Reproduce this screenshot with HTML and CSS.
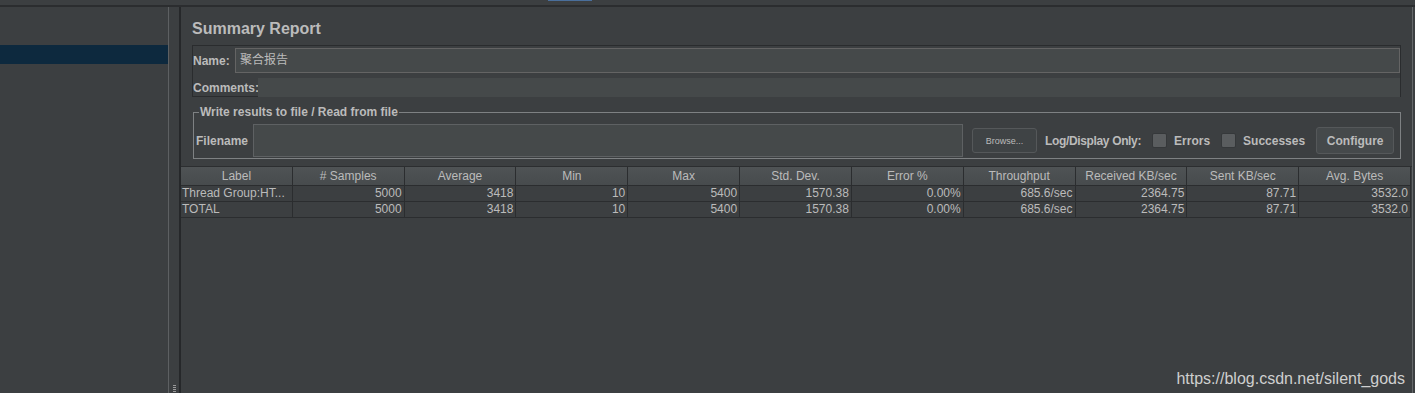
FILE: index.html
```html
<!DOCTYPE html>
<html>
<head>
<meta charset="utf-8">
<link rel="stylesheet" href="styles.css">
</head>
<body>
<div class="top"><div class="tab"></div></div>
<div class="main">
  <div class="left">
    <div class="sel"></div>
  </div>
  <div class="split"><div class="grip"></div></div>
  <div class="right">
    <div class="pad">
      <div class="title">Summary Report</div>
      <div class="namebox">
        <div class="row1"><span class="lbl">Name:</span><div class="nameinput">聚合报告</div></div>
        <div class="row2"><span class="lbl">Comments:</span><div class="cominput"></div></div>
      </div>
      <fieldset class="fs">
        <legend>Write results to file / Read from file</legend>
        <div class="fsrow">
          <span class="lbl">Filename</span>
          <div class="fileinput"></div>
          <button class="browse">Browse...</button>
          <span class="lbl ldo">Log/Display Only:</span>
          <span class="chk"></span><span class="lbl">Errors</span>
          <span class="chk"></span><span class="lbl">Successes</span>
          <button class="conf">Configure</button>
        </div>
      </fieldset>
    </div>
    <div class="table">
      <div class="thead">
        <div>Label</div><div># Samples</div><div>Average</div><div>Min</div><div>Max</div><div>Std. Dev.</div><div>Error %</div><div>Throughput</div><div>Received KB/sec</div><div>Sent KB/sec</div><div>Avg. Bytes</div>
      </div>
      <div class="trow">
        <div class="l">Thread Group:HT...</div><div>5000</div><div>3418</div><div>10</div><div>5400</div><div>1570.38</div><div>0.00%</div><div>685.6/sec</div><div>2364.75</div><div>87.71</div><div>3532.0</div>
      </div>
      <div class="trow">
        <div class="l">TOTAL</div><div>5000</div><div>3418</div><div>10</div><div>5400</div><div>1570.38</div><div>0.00%</div><div>685.6/sec</div><div>2364.75</div><div>87.71</div><div>3532.0</div>
      </div>
      <div class="wm">https://blog.csdn.net/silent_gods</div>
    </div>
  </div>
</div>
</body>
</html>
```
FILE: styles.css
```css
html, body { margin: 0; padding: 0; }
body {
  width: 1415px; height: 393px; overflow: hidden;
  background: #3c3f41;
  font-family: "Liberation Sans", "Noto Sans CJK SC", sans-serif;
  font-size: 12px; color: #bbbbbb;
}
.top { height: 5px; border-bottom: 2px solid #2b2d2f; position: relative; }
.tab { position: absolute; left: 548px; top: 0; width: 44px; height: 1px; background: #4a6f9c; }
.main { display: flex; height: 386px; }
.left { flex: 0 0 169px; border-right: 1px solid #5d6062; padding-top: 38px; box-sizing: border-box; }
.sel { height: 19px; background: #0d293e; }
.split { flex: 0 0 10px; position: relative; }
.grip { position: absolute; left: 4px; bottom: 0; width: 3px; height: 8px;
  background: repeating-linear-gradient(180deg, #9a9a9a 0 1px, transparent 1px 2px); }
.right { flex: 1 1 auto; min-width: 0; border-left: 2px solid #26282a; border-right: 1px solid #65686a; margin-right: 2px; display: flex; flex-direction: column; position: relative; }
.pad { padding: 0 11px 0 11px; }
.title { font-weight: bold; font-size: 16px; margin-top: 13px; height: 25px; color: #bbbbbb; }
.lbl { font-weight: bold; white-space: nowrap; }
.namebox { border: 1px solid #2a2c2e; height: 52px; box-sizing: border-box; padding: 2px 0 0 0; display: flex; flex-direction: column; }
.row1 { display: flex; align-items: center; height: 25px; }
.row1 .lbl { width: 42px; }
.nameinput { flex: 1; height: 25px; box-sizing: border-box; background: #45494a; border: 1px solid #646464; padding-left: 4px; line-height: 22px; font-size: 12px; }
.row2 { display: flex; align-items: center; height: 19px; margin-top: 5px; }
.row2 .lbl { width: 65px; }
.cominput { flex: 1; height: 19px; background: #45494a; }
.fs { margin: 9px 0 0 1px; border: 1px solid #7e8183; padding: 6px 5px 1px 2px; min-width: 0; }
.fs legend { font-weight: bold; padding: 0 1px; margin-left: 3px; line-height: 12px; }
.fsrow { display: flex; align-items: center; height: 33px; }
.fsrow > .lbl:first-child { width: 57px; }
.fileinput { width: 710px; height: 33px; box-sizing: border-box; background: #45494a; border: 1px solid #5e6163; }
.browse { margin-left: 9px; width: 65px; height: 25px; background: #3f4345; border: 1px solid #55585a; border-radius: 3px; color: #bbbbbb; font-family: "Liberation Sans", sans-serif; font-size: 9px; padding: 0; }
.ldo { margin-left: 8px; letter-spacing: -0.35px; }
.chk { width: 13px; height: 13px; background: #5a5d5f; border: 1px solid #35383a; border-radius: 2px; margin: 0 7px 0 11px; }
.conf { margin-left: 11px; width: 78px; height: 27px; background: #45494b; border: 1px solid #55585a; border-radius: 3px; color: #bbbbbb; font-family: "Liberation Sans", sans-serif; font-size: 12px; font-weight: bold; padding: 0; }
.table { margin-top: 7px; border-top: 1px solid #2c2e30; flex: 1; position: relative; }
.thead, .trow { display: grid; grid-template-columns: repeat(11, 1fr); width: 1230px; }
.thead { height: 18px; background: linear-gradient(#4f5355, #474b4d); border-bottom: 1px solid #2b2d2f; }
.thead div { text-align: center; line-height: 18px; border-right: 1px solid #2b2d2f; white-space: nowrap; overflow: hidden; }
.trow { height: 15px; border-bottom: 1px solid #2b2d2f; }
.trow div { text-align: right; line-height: 15px; padding-right: 2px; border-right: 1px solid #2b2d2f; white-space: nowrap; overflow: hidden; }
.trow div.l { text-align: left; padding-left: 1px; }
.wm { position: absolute; right: 7px; bottom: 5px; font-size: 16px; color: #cfcfcf; }
```
